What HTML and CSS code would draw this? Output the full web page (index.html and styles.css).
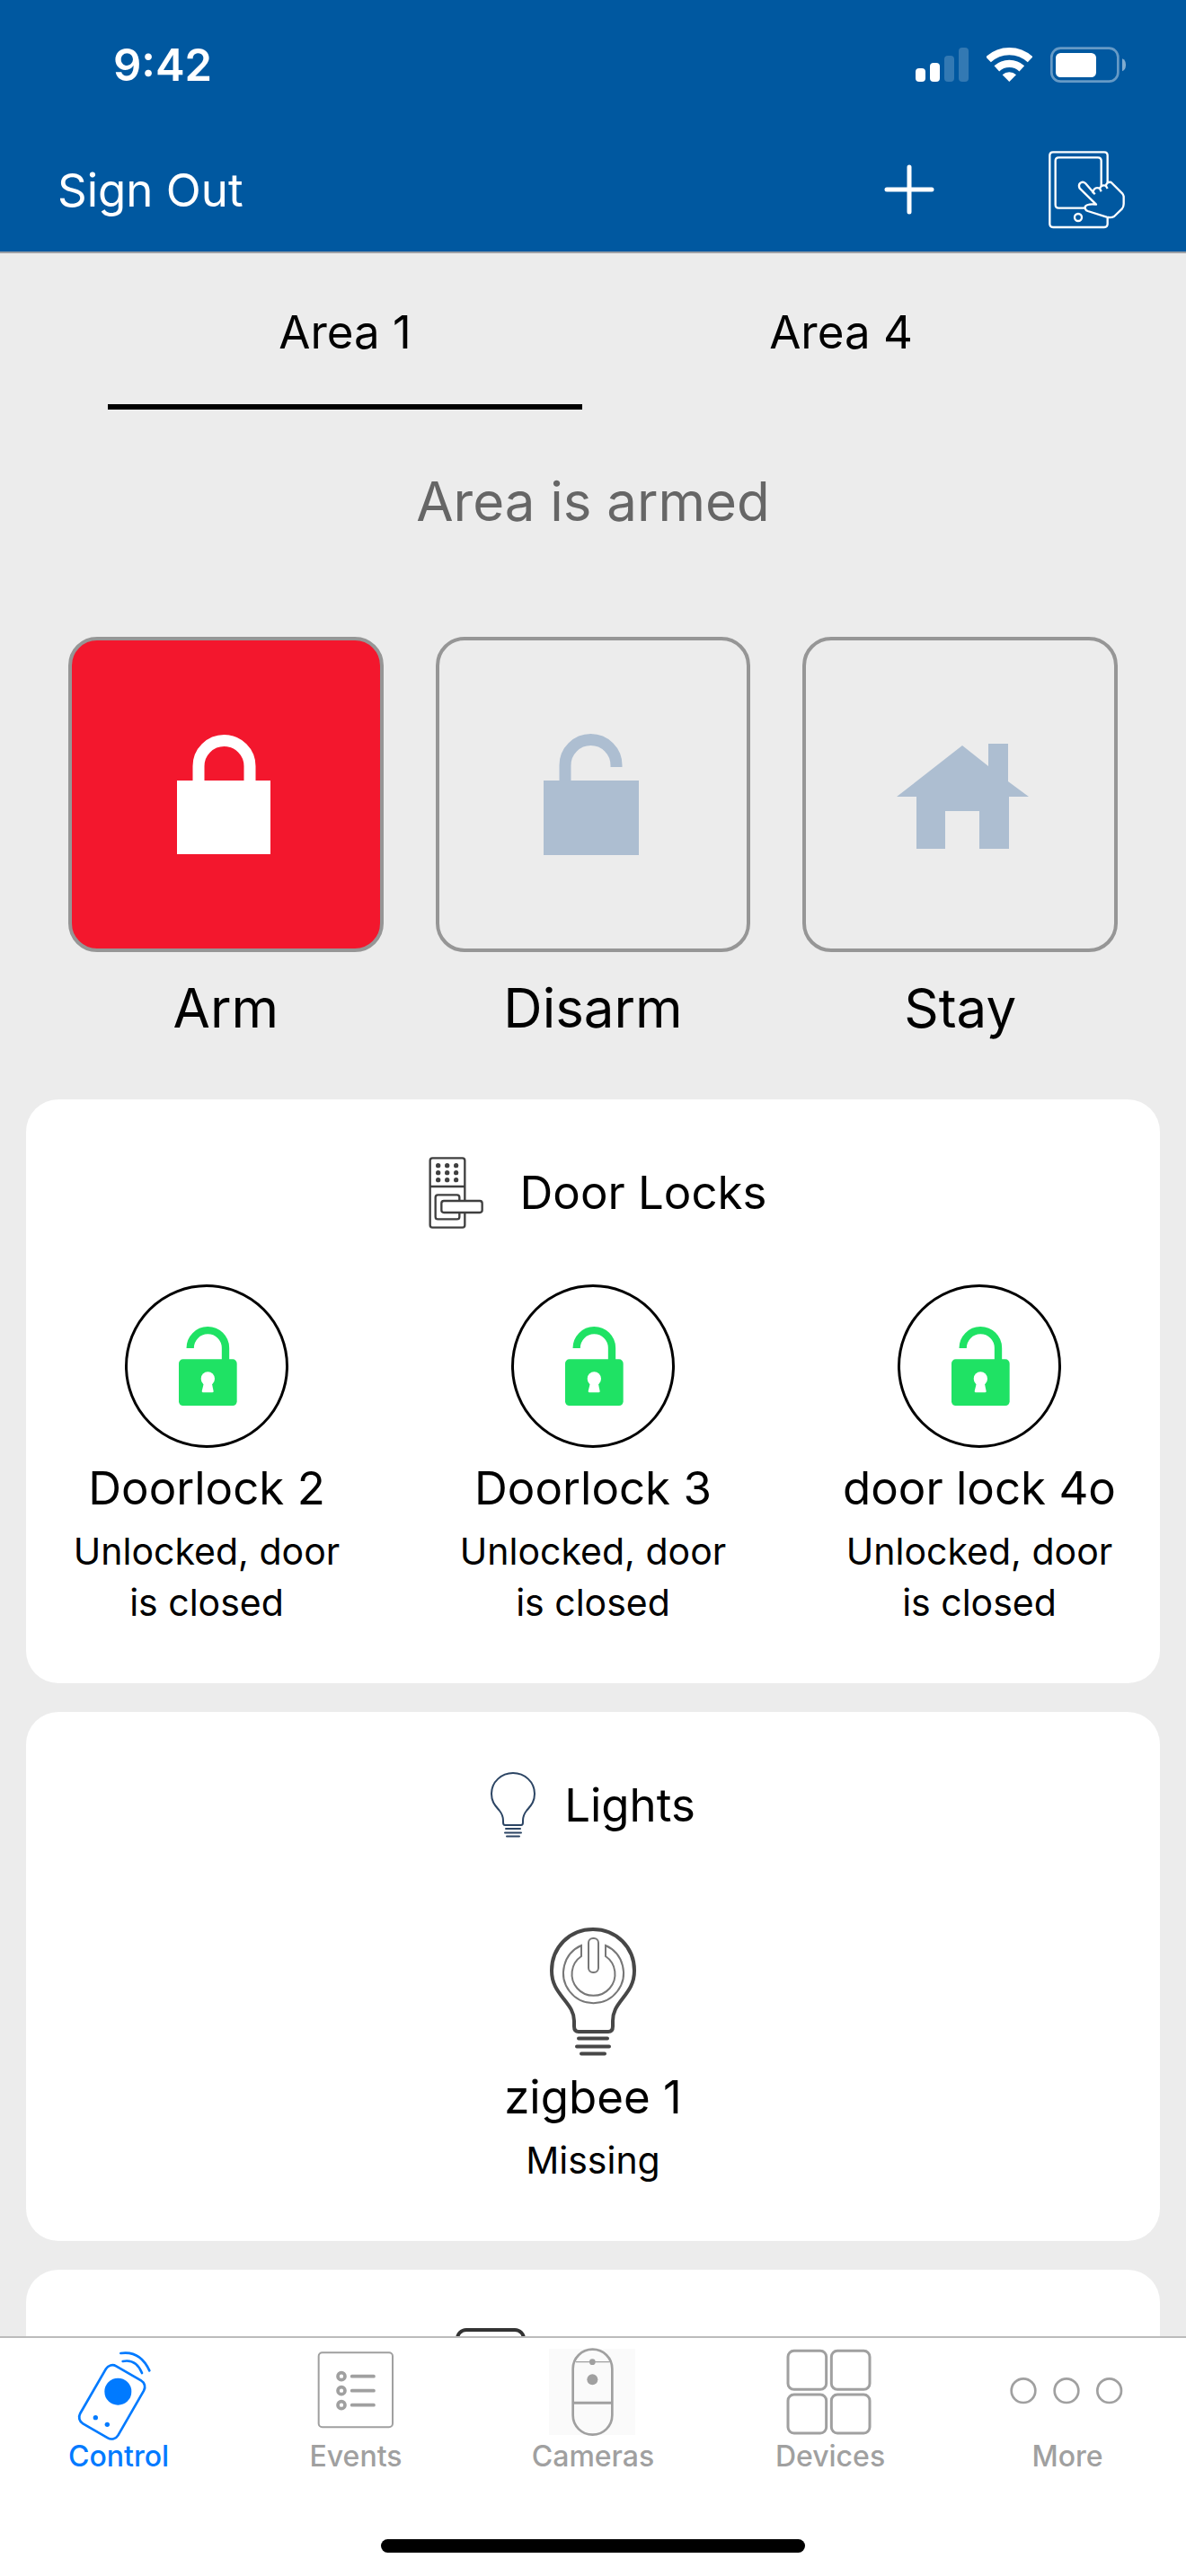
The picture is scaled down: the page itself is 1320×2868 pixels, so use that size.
FILE: index.html
```html
<!DOCTYPE html>
<html lang="en">
<head>
<meta charset="utf-8">
<meta name="viewport" content="width=device-width, initial-scale=1">
<title>Control</title>
<link rel="stylesheet" href="styles.css">
</head>
<body>
<svg width="0" height="0" hidden>
  <symbol id="unlocked" viewBox="336 489 528 528">
    <rect x="507" y="730" width="194" height="155" rx="14" fill="#1fe264"/>
    <path d="M545 693A59 59 0 0 1 663 692V735" fill="none" stroke="#1fe264" stroke-width="25"/>
    <circle cx="604" cy="795" r="23" fill="#fff"/>
    <path d="M591 808L584 837Q584 841 588 841H619Q623 841 623 837L617 808Z" fill="#fff"/>
  </symbol>
</svg>

<header class="header">
  <div class="status-bar">
    <span class="clock">9:42</span>
    <div class="status-icons">
      <svg width="59" height="40" viewBox="0 0 59 40" fill="#fff" aria-label="Signal">
        <rect x="0" y="24" width="11" height="15" rx="4"/>
        <rect x="16" y="18" width="11" height="21" rx="4"/>
        <rect x="32" y="10" width="11" height="29" rx="4" opacity=".2"/>
        <rect x="48" y="1" width="11" height="38" rx="4" opacity=".2"/>
      </svg>
      <svg width="51" height="40" viewBox="409 155 153 120" aria-label="Wi-Fi">
        <path d="M415 198A102 102 0 0 1 555 198M443 228A62 62 0 0 1 527 228" fill="none" stroke="#fff" stroke-width="25"/>
        <path d="M485 272L462 249A34 34 0 0 1 508 249Z" fill="#fff"/>
      </svg>
      <svg width="85" height="40" viewBox="624 155 255 120" aria-label="Battery">
        <rect x="628" y="160" width="222" height="111" rx="30" fill="none" stroke="#fff" stroke-width="8" opacity=".4"/>
        <rect x="642" y="176" width="135" height="81" rx="16" fill="#fff"/>
        <path d="M864 195Q876 200 876 216Q876 232 864 237Z" fill="#fff" opacity=".5"/>
      </svg>
    </div>
  </div>
  <div class="nav-bar">
    <button class="sign-out" type="button">Sign Out</button>
    <div class="nav-actions">
      <button class="icon-button" type="button" aria-label="Add">
        <svg width="56" height="56" viewBox="0 0 56 56"><path d="M28 3V53M3 28H53" stroke="#fff" stroke-width="5" stroke-linecap="round"/></svg>
      </button>
      <button class="icon-button" type="button" aria-label="Panel">
        <svg width="90" height="90" viewBox="612 497 270 270" fill="none" stroke="#fff" stroke-width="7" stroke-linejoin="round">
          <path d="M818 608V518Q818 507 807 507H636Q625 507 625 518V747Q625 758 636 758H807Q818 758 818 747V727"/>
          <path d="M797 620V536Q797 525 786 525H655Q644 525 644 536V683Q644 694 655 694H744"/>
          <circle cx="720" cy="725" r="12"/>
          <path d="M776 648L744 611Q735 603 726 611Q720 618 725 628L780 682Q748 679 743 690Q742 700 752 704L815 724Q830 728 840 722L866 697Q872 690 872 680V655Q871 650 868 646L830 608Q815 604 812 622"/>
          <path d="M770 645V638Q775 622 792 628L797 639M792 630Q796 615 812 619L818 629"/>
        </svg>
      </button>
    </div>
  </div>
</header>

<main class="content">
  <div class="tabs" role="tablist">
    <button class="tab tab-active" type="button" role="tab" aria-selected="true">Area 1</button>
    <button class="tab" type="button" role="tab" aria-selected="false">Area 4</button>
  </div>

  <p class="area-status">Area is armed</p>

  <div class="modes">
    <div class="mode">
      <button class="mode-button mode-armed" type="button" aria-labelledby="arm">
        <svg width="160" height="160" viewBox="0 0 160 160"><path d="M26 65H130V147H26Z" fill="#fff"/><path d="M50 66V49A28 28 0 0 1 107 49V66" fill="none" stroke="#fff" stroke-width="13"/></svg>
      </button>
      <span class="mode-label" id="arm">Arm</span>
    </div>
    <div class="mode">
      <button class="mode-button" type="button" aria-labelledby="disarm">
        <svg width="160" height="160" viewBox="0 0 160 160"><path d="M25 65H131V148H25Z" fill="#adbed1"/><path d="M49 66V48A28 28 0 0 1 106 48V50" fill="none" stroke="#adbed1" stroke-width="13"/></svg>
      </button>
      <span class="mode-label" id="disarm">Disarm</span>
    </div>
    <div class="mode">
      <button class="mode-button" type="button" aria-labelledby="stay">
        <svg width="160" height="160" viewBox="0 0 160 160"><path d="M82 26L111 49V24H133V66L156 83H134V141H101V99H63V141H31V83H9Z" fill="#adbed1"/></svg>
      </button>
      <span class="mode-label" id="stay">Stay</span>
    </div>
  </div>

  <section class="card">
    <h2 class="card-title">
      <svg width="80" height="80" viewBox="21 54 240 240" fill="none" stroke="#3f3f3f" stroke-width="7">
        <rect x="56" y="58" width="116" height="232" rx="8"/>
        <path d="M56 153H172"/>
        <rect x="74" y="181" width="80" height="81" rx="8"/>
        <rect x="94" y="201" width="136" height="39" rx="8" fill="#fff"/>
        <g fill="#3f3f3f" stroke="none">
          <circle cx="83" cy="83" r="8"/><circle cx="113" cy="83" r="8"/><circle cx="143" cy="83" r="8"/>
          <circle cx="83" cy="107" r="8"/><circle cx="113" cy="107" r="8"/><circle cx="143" cy="107" r="8"/>
          <circle cx="83" cy="131" r="8"/><circle cx="113" cy="131" r="8"/><circle cx="143" cy="131" r="8"/>
        </g>
      </svg>
      <span>Door Locks</span>
    </h2>
    <div class="devices">
      <div class="device">
        <button class="lock-button" type="button" aria-label="Lock Doorlock 2"><svg width="176" height="176"><use href="#unlocked"/></svg></button>
        <h3 class="device-name">Doorlock 2</h3>
        <p class="device-state">Unlocked, door is closed</p>
      </div>
      <div class="device">
        <button class="lock-button" type="button" aria-label="Lock Doorlock 3"><svg width="176" height="176"><use href="#unlocked"/></svg></button>
        <h3 class="device-name">Doorlock 3</h3>
        <p class="device-state">Unlocked, door is closed</p>
      </div>
      <div class="device">
        <button class="lock-button" type="button" aria-label="Lock door lock 4o"><svg width="176" height="176"><use href="#unlocked"/></svg></button>
        <h3 class="device-name">door lock 4o</h3>
        <p class="device-state">Unlocked, door is closed</p>
      </div>
    </div>
  </section>

  <section class="card">
    <h2 class="card-title">
      <svg width="50" height="74" viewBox="0 0 50 74" fill="none" stroke="#2c4564" stroke-width="2" stroke-linecap="round">
        <path d="M25 1C12 1 1 11 1 24C1 34 6 38 10 43Q14 48 14 54V56Q14 59 16 59H34Q36 59 36 56V54Q36 48 40 43C44 38 49 34 49 24C49 11 38 1 25 1Z"/>
        <path d="M17 63H33M16 67.500H34M18 71.500H32"/>
      </svg>
      <span>Lights</span>
    </h2>
    <div class="devices devices-single">
      <div class="device">
        <button class="light-button" type="button" aria-label="Switch zigbee 1">
          <svg width="96" height="144" viewBox="0 0 96 144" fill="none" stroke="#474747" stroke-width="4" stroke-linecap="round">
            <path d="M48 2C22 2 2 22 2 48C2 62 8 70 15 79C22 88 27 94 27 104V110Q27 116 32 116H65Q70 116 70 110V104C70 94 74 88 81 79C88 70 94 62 94 48C94 22 74 2 48 2Z"/>
            <path d="M32 123.500H64M30 132.500H66M35 140.500H61"/>
            <g stroke="#777" stroke-width="2">
              <path d="M35 20V32A24 24 0 1 0 62 32V20A33.500 33.500 0 1 1 35 20Z"/>
              <rect x="43" y="12" width="11" height="38" rx="5"/>
            </g>
          </svg>
        </button>
        <h3 class="device-name">zigbee 1</h3>
        <p class="device-state">Missing</p>
      </div>
    </div>
  </section>

  <section class="card">
    <div class="card-title">
      <svg width="78" height="78" viewBox="0 0 78 78" fill="none" stroke="#333" stroke-width="4"><rect x="2" y="2" width="74" height="74" rx="10"/></svg>
      <span class="title-slot"></span>
    </div>
  </section>
</main>

<footer class="footer">
  <nav class="tab-bar">
    <a class="tab-item tab-item-active" href="#control">
      <svg width="100" height="100" viewBox="246 339 300 300" fill="none" stroke="currentColor" stroke-width="8" stroke-linecap="round">
        <rect x="301" y="412" width="146" height="222" rx="25" transform="rotate(30 374 523)"/>
        <circle cx="394" cy="488" r="45" fill="currentColor" stroke="none"/>
        <circle cx="319" cy="575" r="8" fill="currentColor" stroke="none"/>
        <circle cx="358" cy="598" r="8" fill="currentColor" stroke="none"/>
        <path d="M403 360Q468 350 499 418M410 387Q454 378 474 426"/>
      </svg>
      <span>Control</span>
    </a>
    <a class="tab-item" href="#events">
      <svg width="100" height="100" viewBox="1038 339 300 300" fill="none" stroke="currentColor" stroke-linecap="round">
        <rect x="1064" y="358" width="247" height="249" rx="12" stroke-width="6"/>
        <g stroke-width="11"><circle cx="1140" cy="437" r="12"/><circle cx="1140" cy="485" r="12"/><circle cx="1140" cy="533" r="12"/><path d="M1175 437H1248M1175 485H1248M1175 533H1248"/></g>
      </svg>
      <span>Events</span>
    </a>
    <a class="tab-item" href="#cameras">
      <svg width="100" height="100" viewBox="390 339 300 300" fill="none" stroke="currentColor">
        <rect x="393" y="345" width="288" height="288" fill="#fafafa" stroke="none"/>
        <rect x="473" y="347" width="131" height="285" rx="65" stroke-width="8"/>
        <path d="M482 389H596" stroke-width="4"/>
        <path d="M473 526H604" stroke-width="9"/>
        <circle cx="538" cy="389" r="10" fill="currentColor" stroke="none"/>
        <circle cx="538" cy="448" r="18" fill="currentColor" stroke="none"/>
      </svg>
      <span>Cameras</span>
    </a>
    <a class="tab-item" href="#devices">
      <svg width="100" height="100" viewBox="1182 339 300 300" fill="none" stroke="currentColor" stroke-width="9">
        <rect x="1191" y="352" width="128" height="129" rx="20"/><rect x="1336" y="352" width="128" height="129" rx="20"/>
        <rect x="1191" y="498" width="128" height="129" rx="20"/><rect x="1336" y="498" width="128" height="129" rx="20"/>
      </svg>
      <span>Devices</span>
    </a>
    <a class="tab-item" href="#more">
      <svg width="100" height="100" viewBox="411 339 300 300" fill="none" stroke="currentColor" stroke-width="8">
        <circle cx="414" cy="485" r="40"/><circle cx="558" cy="485" r="40"/><circle cx="701" cy="485" r="40"/>
      </svg>
      <span>More</span>
    </a>
  </nav>
  <div class="home-indicator"></div>
</footer>
</body>
</html>
```
FILE: styles.css
```css
* {
  box-sizing: border-box;
}

body {
  margin: 0;
  height: 100vh;
  display: flex;
  flex-direction: column;
  overflow: hidden;
  background: #ececec;
  color: #000;
  font-family: Inter, "Liberation Sans", sans-serif;
  font-size: 51px;
}

button {
  padding: 0;
  border: 0;
  background: none;
  color: inherit;
  font: inherit;
  cursor: pointer;
}

svg {
  display: block;
  flex: none;
}

h2,
h3,
p {
  margin: 0;
  font-weight: 400;
}

/* Header */
.header {
  flex: none;
  padding-bottom: 2px;
  background: #0058a0;
  border-bottom: 2px solid #9c9fa6;
  color: #fff;
}

.status-bar {
  display: flex;
  justify-content: space-between;
  align-items: center;
  height: 144px;
  padding: 0 66px 0 126px;
}

.clock {
  font-size: 49px;
  font-weight: 600;
}

.status-icons {
  display: flex;
  gap: 20px;
}

.nav-bar {
  display: flex;
  justify-content: space-between;
  align-items: center;
  height: 134px;
  padding: 0 66px 0 64px;
}

.nav-actions {
  display: flex;
  align-items: center;
  gap: 124px;
}

/* Scrolling content */
.content {
  flex: 1;
  min-height: 0;
  overflow: hidden;
}

.tabs {
  display: grid;
  grid-template-columns: 1fr 1fr;
  gap: 24px;
  padding: 0 120px;
}

.tab {
  padding: 56px 0 48px;
  border-bottom: 6px solid transparent;
  line-height: 64px;
}

.tab-active {
  border-bottom-color: #000;
}

.area-status {
  margin: 62px 0 111px;
  color: #666;
  font-size: 60px;
  line-height: 80px;
  text-align: center;
}

.modes {
  display: grid;
  grid-template-columns: repeat(3, 1fr);
  gap: 58px;
  margin-bottom: 62px;
  padding: 0 76px;
}

.mode {
  display: flex;
  flex-direction: column;
  gap: 22px;
}

.mode-button {
  display: flex;
  justify-content: center;
  align-items: center;
  aspect-ratio: 1;
  border: 4px solid #969696;
  border-radius: 32px;
}

.mode-armed {
  background: #f3172d;
}

.mode-label {
  font-size: 60px;
  line-height: 80px;
  text-align: center;
}

/* Cards */
.card {
  margin: 0 29px 32px;
  padding: 64px 31px 61px;
  border-radius: 36px;
  background: #fff;
}

.card-title {
  display: flex;
  justify-content: center;
  align-items: center;
  gap: 32px;
  height: 80px;
  margin-bottom: 62px;
  font-size: 51px;
}

.title-slot {
  width: 196px;
}

.devices {
  display: grid;
  grid-template-columns: repeat(3, 1fr);
  gap: 90px;
}

.devices-single {
  grid-template-columns: 1fr;
}

.device {
  display: flex;
  flex-direction: column;
  align-items: center;
}

.lock-button {
  border: 3px solid #000;
  border-radius: 50%;
}

.light-button {
  padding-top: 34px;
}

.device-name {
  margin: 15px 0 12px;
  font-size: 51px;
  line-height: 60px;
  white-space: nowrap;
}

.device-state {
  max-width: 320px;
  font-size: 41px;
  line-height: 57px;
  text-align: center;
}

/* Bottom tab bar */
.footer {
  flex: none;
  padding-bottom: 26px;
  border-top: 2px solid #bbb;
  background: #fff;
}

.tab-bar {
  display: grid;
  grid-template-columns: repeat(5, 1fr);
  padding: 10px 0 70px;
}

.tab-item {
  display: flex;
  flex-direction: column;
  align-items: center;
  color: #a0a0a0;
  font-size: 32px;
  font-weight: 500;
  line-height: 44px;
  text-decoration: none;
}

.tab-item svg {
  overflow: visible;
}

.tab-item-active {
  color: #007aff;
}

.home-indicator {
  width: 472px;
  height: 15px;
  margin: 0 auto;
  border-radius: 8px;
  background: #000;
}
```
